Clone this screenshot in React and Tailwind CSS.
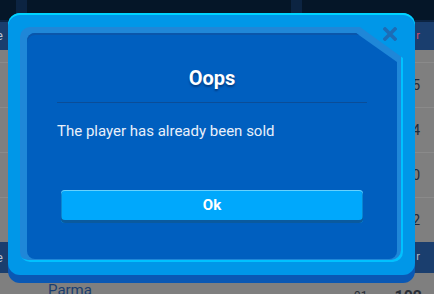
export default function App() {
  const rows = ['5', '4', '0', '2']

  return (
    <div className="relative w-[434px] h-[294px] overflow-hidden bg-[#7f7f7f] font-['Roboto',sans-serif]">
      {/* Dimmed page behind the dialog */}
      <div className="flex flex-col">
        <div className="h-[22px] bg-[#0c2442] flex gap-[11px]">
          <div className="w-[16px] h-[20px] bg-[#051628] rounded-br-[6px]" />
          <div className="w-[264px] h-[20px] bg-[#051628] rounded-b-[6px]" />
          <div className="flex-1 h-[20px] bg-[#051628] rounded-bl-[6px]" />
        </div>

        <div className="h-[28px] bg-[#1a3e6e] flex items-center justify-between">
          <span className="-ml-[4px] text-[13px] text-[#b8c2d2]">e</span>
          <span className="mr-[14px] text-[11px] text-[#d0506e]">r</span>
        </div>

        <div className="pt-[12px] bg-[#7f7f7f]">
          {rows.map((n, i) => (
            <div key={i} className="h-[45px] border-t border-[#8a8a8a] flex items-center justify-end pr-[14px]">
              <span className="text-[14px] text-[#202a3a]">{n}</span>
            </div>
          ))}
        </div>

        <div className="h-[31px] bg-[#1a3e6e] flex items-center justify-between">
          <span className="-ml-[4px] text-[13px] text-[#b8c2d2]">e</span>
          <span className="mr-[14px] text-[11px] text-[#b0b8c8]">r</span>
        </div>

        <div className="h-[30px] flex items-start pt-[6px]">
          <span className="ml-[48px] text-[15px] text-[#1a3e70]">Parma</span>
          <span className="ml-auto mt-[8px] text-[12px] text-[#2a2f38]">91</span>
          <span className="ml-[27px] mr-[12px] mt-[6px] text-[16px] font-bold text-[#2a2f38]">102</span>
        </div>
      </div>

      {/* Dialog */}
      <div className="absolute left-[8px] top-[13px] w-[407px] h-[262px] rounded-[12px] bg-[#0097e8] shadow-[inset_0_2px_0_#00d4ff,0_8px_0_#0a58b4] pt-[14px] pl-[12px] pr-[12px] pb-[13px]">
        <button className="absolute left-[375px] top-[14px] w-[14px] h-[14px]">
          <svg viewBox="0 0 14 14" width="14" height="14">
            <path d="M2 2 L12 12 M12 2 L2 12" stroke="#1c6cb6" strokeWidth="3.6" strokeLinecap="square" />
          </svg>
        </button>

        <div className="h-full rounded-[10px] bg-[#1f87d8] pt-[6px] pl-[7px] pr-[6px] pb-[3px] shadow-[inset_-2px_-2px_0_#00c2ff] [clip-path:polygon(0_0,calc(100%_-_43px)_0,100%_31px,100%_100%,0_100%)]">
          <div className="h-full rounded-[8px] bg-[#005fbf] shadow-[inset_0_2px_0_#0a56aa] flex flex-col [clip-path:polygon(0_0,calc(100%_-_41px)_0,100%_29px,100%_100%,0_100%)]">
            <h2 className="mt-[33px] text-center text-[20px] leading-[24px] font-bold text-white [text-shadow:0_2px_2px_rgba(0,20,60,0.45)]">
              Oops
            </h2>
            <div className="mt-[12px] mx-[30px] h-[1px] bg-[#0a4d98]" />
            <p className="mt-[18px] px-[30px] text-[15px] leading-[20px] text-[#e8effa]">
              The player has already been sold
            </p>
            <button className="mt-[49px] mx-[34px] h-[33px] rounded-[4px] bg-[#00a8fc] shadow-[inset_0_-3px_0_#0a5a9e,inset_0_1px_0_#66d2ff,inset_1px_0_0_#0a86d0,inset_-1px_0_0_#0a86d0] pb-[3px] flex items-center justify-center text-[15px] font-bold text-white">
              Ok
            </button>
          </div>
        </div>
      </div>
    </div>
  )
}
